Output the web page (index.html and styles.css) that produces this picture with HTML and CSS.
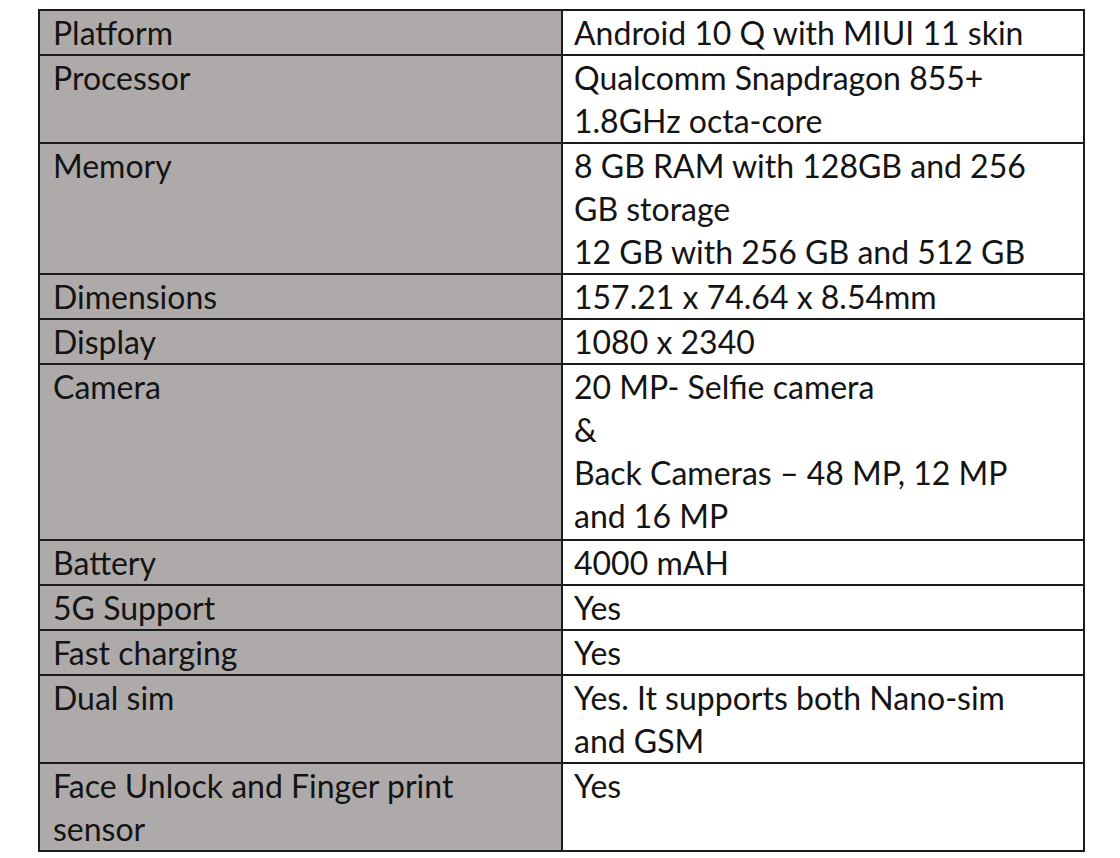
FILE: index.html
```html
<!DOCTYPE html>
<html>
<head>
<meta charset="utf-8">
<link rel="stylesheet" href="styles.css">
</head>
<body>
<table class="spec">
  <tr><td class="k">Platform</td><td class="v">Android 10 Q with MIUI 11 skin</td></tr>
  <tr><td class="k">Processor</td><td class="v">Qualcomm Snapdragon 855+<br>1.8GHz octa-core</td></tr>
  <tr><td class="k">Memory</td><td class="v">8 GB RAM with 128GB and 256<br>GB storage<br>12 GB with 256 GB and 512 GB</td></tr>
  <tr><td class="k">Dimensions</td><td class="v">157.21 x 74.64 x 8.54mm</td></tr>
  <tr><td class="k">Display</td><td class="v">1080 x 2340</td></tr>
  <tr class="tall"><td class="k">Camera</td><td class="v">20 MP- Selfie camera<br>&amp;<br>Back Cameras – 48 MP, 12 MP<br>and 16 MP</td></tr>
  <tr><td class="k">Battery</td><td class="v">4000 mAH</td></tr>
  <tr><td class="k">5G Support</td><td class="v">Yes</td></tr>
  <tr><td class="k">Fast charging</td><td class="v">Yes</td></tr>
  <tr><td class="k">Dual sim</td><td class="v">Yes. It supports both Nano-sim<br>and GSM</td></tr>
  <tr><td class="k">Face Unlock and Finger print<br>sensor</td><td class="v">Yes</td></tr>
</table>
</body>
</html>
```
FILE: styles.css
```css
html, body {
  margin: 0;
  padding: 0;
  background: #ffffff;
}
body {
  padding: 9px 0 0 38px;
}
.spec {
  border-collapse: collapse;
  width: 1047px;
  table-layout: fixed;
  font-family: Lato, "Open Sans", sans-serif;
  font-size: 32px;
  line-height: 43px;
  color: #141414;
  border: 2px solid #1c1c1c;
}
.spec td {
  border: 2px solid #1c1c1c;
  vertical-align: top;
  padding: 0 0 0 11px;
  white-space: nowrap;
  overflow: hidden;
}
.spec .k {
  width: 508px;
  background: #aeaaaa;
  padding-left: 13px;
}
.spec .v {
  background: #ffffff;
}
.spec .tall td {
  padding-bottom: 2px;
}
```
